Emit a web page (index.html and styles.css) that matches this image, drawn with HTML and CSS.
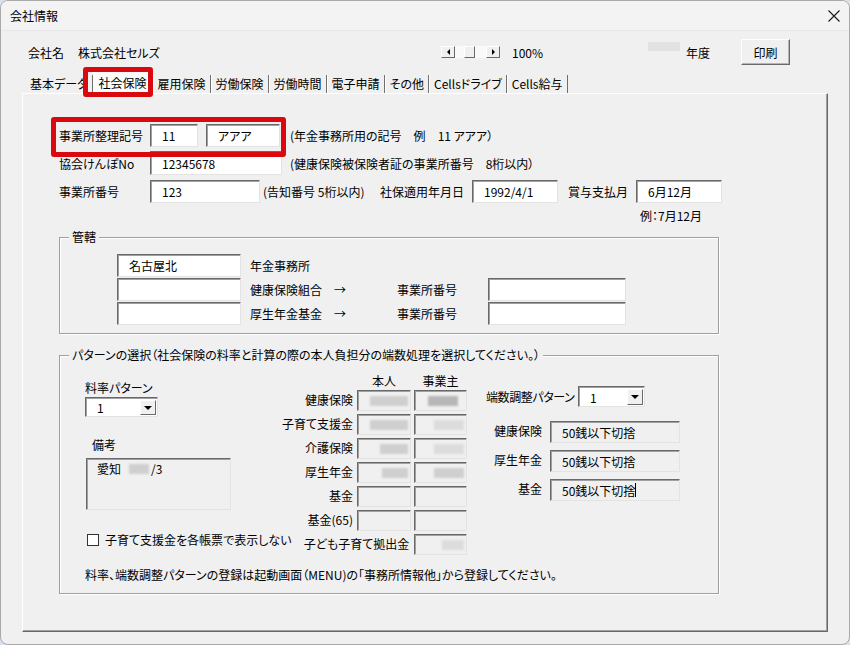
FILE: index.html
```html
<!DOCTYPE html>
<html lang="ja">
<head>
    <meta charset="UTF-8">
    <title>会社情報</title>
    <link rel="stylesheet" href="styles.css">
</head>
<body>

<div class="window">
    <div class="titlebar">
        <span>会社情報</span>
        <svg class="close" width="12" height="12" viewBox="0 0 12 12"><path d="M0.5 0.5 L11.5 11.5 M11.5 0.5 L0.5 11.5" stroke="#1a1a1a" stroke-width="1.1" fill="none"/></svg>
    </div>

    <div class="company">
        <span class="company-label">会社名</span>
        <span class="company-name">株式会社セルズ</span>
        <div class="scroller">
            <span class="sbtn"><span class="tri-left"></span></span>
            <span class="track"><span class="thumb"></span></span>
            <span class="sbtn"><span class="tri-right"></span></span>
        </div>
        <span class="zoom">100%</span>
        <span class="year-mask"></span>
        <span class="year">年度</span>
        <button class="print">印刷</button>
    </div>

    <div class="tabs">
        <span class="tab">基本データ</span>
        <span class="tab active">社会保険</span>
        <span class="tab">雇用保険</span>
        <span class="tab">労働保険</span>
        <span class="tab">労働時間</span>
        <span class="tab">電子申請</span>
        <span class="tab">その他</span>
        <span class="tab">Cellsドライブ</span>
        <span class="tab">Cells給与</span>
    </div>

    <div class="panel">
        <div class="row">
            <span class="lbl-main">事業所整理記号</span>
            <span class="box w48">11</span>
            <span class="box w74 gap8">アアア</span>
            <span class="note gap10">(年金事務所用の記号　例　11 アアア）</span>
        </div>
        <div class="row row2">
            <span class="lbl-main">協会けんぽNo</span>
            <span class="box w132">12345678</span>
            <span class="note gap8">(健康保険被保険者証の事業所番号　8桁以内）</span>
        </div>
        <div class="row row3">
            <span class="lbl-main">事業所番号</span>
            <span class="box w110">123</span>
            <span class="note gap3 w117">(告知番号 5桁以内)</span>
            <span class="w92">社保適用年月日</span>
            <span class="box w86">1992/4/1</span>
            <span class="gap10 w68">賞与支払月</span>
            <span class="box w86">6月12月</span>
        </div>
        <div class="example">例：7月12月</div>

        <div class="group group-office">
            <span class="group-title">管轄</span>
            <div class="office-row">
                <span class="box w124">名古屋北</span>
                <span class="gap9">年金事務所</span>
            </div>
            <div class="office-row">
                <span class="box w124"></span>
                <span class="gap9 w147">健康保険組合　→</span>
                <span class="w91">事業所番号</span>
                <span class="box w138"></span>
            </div>
            <div class="office-row">
                <span class="box w124"></span>
                <span class="gap9 w147">厚生年金基金　→</span>
                <span class="w91">事業所番号</span>
                <span class="box w138"></span>
            </div>
        </div>

        <div class="group group-pattern">
            <span class="group-title">パターンの選択（社会保険の料率と計算の際の本人負担分の端数処理を選択してください。）</span>
            <div class="cols">
                <div class="col-left">
                    <div class="rate-label">料率パターン</div>
                    <div class="combo combo-rate">
                        <span class="combo-val">1</span>
                        <span class="drop"><span class="tri-down"></span></span>
                    </div>
                    <div class="remark-label">備考</div>
                    <div class="remark">愛知 <span class="mask remark-mask"></span>/3</div>
                    <label class="check">
                        <span class="checkbox"></span>
                        子育て支援金を各帳票で表示しない
                    </label>
                </div>

                <div class="rates">
                    <span></span>
                    <span class="head">本人</span>
                    <span class="head">事業主</span>

                    <span class="rlabel">健康保険</span>
                    <span class="box off"><span class="mask m40"></span></span>
                    <span class="box off pr8"><span class="mask dark m30"></span></span>

                    <span class="rlabel">子育て支援金</span>
                    <span class="box off"><span class="mask m40"></span></span>
                    <span class="box off"><span class="mask light m30"></span></span>

                    <span class="rlabel">介護保険</span>
                    <span class="box off"><span class="mask m28"></span></span>
                    <span class="box off"><span class="mask light m30"></span></span>

                    <span class="rlabel">厚生年金</span>
                    <span class="box off"><span class="mask m26"></span></span>
                    <span class="box off"><span class="mask m30"></span></span>

                    <span class="rlabel">基金</span>
                    <span class="box off"></span>
                    <span class="box off"></span>

                    <span class="rlabel">基金(65)</span>
                    <span class="box off"></span>
                    <span class="box off"></span>

                    <span class="rlabel wide">子ども子育て拠出金</span>
                    <span class="box off"><span class="mask light m22"></span></span>
                </div>

                <div class="col-right">
                    <div class="round-row">
                        <span class="round-label">端数調整パターン</span>
                        <div class="combo combo-round">
                            <span class="combo-val">1</span>
                            <span class="drop"><span class="tri-down"></span></span>
                        </div>
                    </div>
                    <div class="round-item first">
                        <span class="ilabel">健康保険</span>
                        <span class="box off w130">50銭以下切捨</span>
                    </div>
                    <div class="round-item">
                        <span class="ilabel">厚生年金</span>
                        <span class="box off w130">50銭以下切捨</span>
                    </div>
                    <div class="round-item">
                        <span class="ilabel">基金</span>
                        <span class="box off w130">50銭以下切捨<span class="caret"></span></span>
                    </div>
                </div>
            </div>
            <div class="foot-note">料率、端数調整パターンの登録は起動画面（MENU)の「事務所情報他」から登録してください。</div>
        </div>
    </div>

    <!-- red highlight marks -->
    <div class="mark mark-tab"></div>
    <div class="mark mark-code"></div>
</div>

</body>
</html>
```

FILE: styles.css
```css
* {
    box-sizing: border-box;
}
body {
    margin: 0;
    background: #d9e1ea;
    font-family: "Noto Sans CJK JP", "Noto Sans", sans-serif;
    font-size: 12px;
    font-feature-settings: "palt";
    color: #000;
}
.window {
    position: relative;
    width: 850px;
    height: 645px;
    background: #f0f0f0;
    border: 1px solid #a9a9a9;
    border-radius: 8px;
    overflow: hidden;
}
.titlebar {
    height: 30px;
    display: flex;
    align-items: center;
    justify-content: space-between;
    padding: 0 9px;
    border-bottom: 1px solid #e8e8e8;
    background: #f3f3f3;
}

/* company row */
.company {
    display: flex;
    align-items: center;
    height: 26px;
    margin-top: 8px;
    padding-left: 27px;
}
.company-label {
    width: 50px;
}
.company-name {
    width: 363px;
}
.scroller {
    display: flex;
    width: 59px;
    height: 12px;
}
.sbtn {
    width: 14px;
    height: 12px;
    display: flex;
    align-items: center;
    justify-content: center;
    background: #f0f0f0;
    border: 1px solid;
    border-color: #fff #696969 #696969 #fff;
}
.track {
    flex: 1;
    background: #f9f9f9;
    padding-left: 9px;
}
.thumb {
    display: block;
    width: 11px;
    height: 12px;
    background: #f0f0f0;
    border: 1px solid;
    border-color: #fff #696969 #696969 #fff;
}
.tri-left {
    border-top: 3px solid transparent;
    border-bottom: 3px solid transparent;
    border-right: 3px solid #000;
}
.tri-right {
    border-top: 3px solid transparent;
    border-bottom: 3px solid transparent;
    border-left: 3px solid #000;
}
.zoom {
    margin-left: 12px;
    width: 136px;
}
.year-mask {
    width: 32px;
    height: 9px;
    margin-top: -12px;
    background: #e2e2e2;
}
.year {
    margin-left: 6px;
    width: 55px;
}
.print {
    width: 49px;
    height: 26px;
    font: inherit;
    background: #f0f0f0;
    border: 1px solid;
    border-color: #fff #696969 #696969 #fff;
    box-shadow: inset -1px -1px 0 #b5b5b5;
    padding: 0;
}

/* tabs */
.tabs {
    display: flex;
    height: 18px;
    margin-top: 10px;
    padding-left: 24px;
}
.tab {
    display: flex;
    align-items: center;
    padding: 0 4px;
    border-right: 1px solid #6e6e6e;
    border-left: 1px solid #fff;
    line-height: 16px;
}
.tab:first-child {
    border-left: none;
    padding-left: 5px;
}
.tab.active {
    background: #fbfbfb;
    padding: 0 5px;
    margin-top: -3px;
    height: 21px;
}

/* panel */
.panel {
    margin-left: 21px;
    width: 806px;
    height: 539px;
    border: 1px solid;
    border-color: #fff #696969 #696969 #fff;
    box-shadow: inset -1px -1px 0 #a0a0a0;
    padding: 30px 0 0 36px;
}
.row {
    display: flex;
    align-items: center;
    height: 23px;
}
.row2 {
    height: 24px;
    margin-top: 4px;
}
.row3 {
    margin-top: 5px;
}
.lbl-main {
    width: 91px;
}
.box {
    display: flex;
    align-items: center;
    height: 100%;
    background: #fff;
    border: 1px solid;
    border-color: #696969 #e3e3e3 #e3e3e3 #696969;
    box-shadow: inset 1px 1px 0 #a0a0a0;
    padding-left: 11px;
    white-space: nowrap;
}
.box.off {
    background: #f0f0f0;
}
.w48 { width: 48px; }
.w68 { width: 68px; }
.w74 { width: 74px; }
.w86 { width: 86px; }
.w91 { width: 91px; }
.w92 { width: 92px; }
.w110 { width: 110px; }
.w117 { width: 117px; }
.w124 { width: 124px; }
.w130 { width: 130px; }
.w132 { width: 132px; }
.w138 { width: 138px; }
.w147 { width: 147px; }
.gap3 { margin-left: 3px; }
.gap8 { margin-left: 8px; }
.gap9 { margin-left: 9px; }
.gap10 { margin-left: 10px; }
.note {
    white-space: nowrap;
}
.example {
    margin: 5px 0 0 581px;
    line-height: 16px;
}

/* group boxes */
.group {
    position: relative;
    width: 660px;
    border: 1px solid #a0a0a0;
    box-shadow: inset 1px 1px 0 #fff, 1px 1px 0 #fff;
}
.group-title {
    position: absolute;
    top: -9px;
    left: 9px;
    padding: 0 3px;
    line-height: 16px;
    background: #f0f0f0;
    white-space: nowrap;
}
.group-office {
    margin-top: 13px;
    padding: 16px 0 8px 57px;
    display: flex;
    flex-direction: column;
    gap: 1px;
}
.office-row {
    display: flex;
    align-items: center;
    height: 23px;
}
.group-pattern {
    margin-top: 21px;
    height: 239px;
    padding: 18px 0 0 25px;
}
.cols {
    display: flex;
    align-items: flex-start;
}
.col-left {
    width: 200px;
    display: flex;
    flex-direction: column;
    align-items: flex-start;
}
.rate-label {
    margin-top: 6px;
    line-height: 16px;
}
.combo {
    display: flex;
    background: #fff;
    border: 1px solid;
    border-color: #696969 #e3e3e3 #e3e3e3 #696969;
    box-shadow: inset 1px 1px 0 #a0a0a0;
    padding: 2px 1px 1px 2px;
}
.combo-rate {
    margin-top: 1px;
    width: 73px;
    height: 20px;
}
.combo-round {
    width: 67px;
    height: 21px;
}
.combo-val {
    flex: 1;
    display: flex;
    align-items: center;
    padding-left: 9px;
}
.drop {
    width: 16px;
    display: flex;
    align-items: center;
    justify-content: center;
    background: #f0f0f0;
    border: 1px solid;
    border-color: #fff #696969 #696969 #fff;
}
.tri-down {
    border-left: 4px solid transparent;
    border-right: 4px solid transparent;
    border-top: 4px solid #000;
}
.remark-label {
    margin: 20px 0 0 7px;
    line-height: 16px;
}
.remark {
    margin: 5px 0 0 1px;
    width: 145px;
    height: 52px;
    background: #f0f0f0;
    border: 1px solid;
    border-color: #696969 #e3e3e3 #e3e3e3 #696969;
    box-shadow: inset 1px 1px 0 #a0a0a0;
    padding: 2px 0 0 10px;
    display: flex;
    align-items: flex-start;
    line-height: 16px;
}
.remark-mask {
    display: inline-block;
    width: 20px;
    height: 11px;
    margin: 3px 2px 0 8px;
}
.check {
    margin: 22px 0 0 2px;
    display: flex;
    align-items: center;
    gap: 6px;
    line-height: 16px;
    white-space: nowrap;
}
.checkbox {
    width: 12px;
    height: 12px;
    background: #fff;
    border: 1px solid #333;
}

/* rates grid */
.rates {
    display: grid;
    grid-template-columns: 69px 54px 53px;
    grid-template-rows: 13px repeat(7, 21px);
    column-gap: 3px;
    row-gap: 3px;
}
.head {
    text-align: center;
    line-height: 13px;
}
.rlabel {
    display: flex;
    align-items: center;
    justify-content: flex-end;
    padding-right: 1px;
    padding-bottom: 2px;
    white-space: nowrap;
}
.rlabel.wide {
    grid-column: span 2;
    justify-content: center;
    padding-left: 18px;
}
.rates .box {
    justify-content: flex-end;
    padding: 0 2px 0 0;
}
.rates .box.pr8 {
    padding-right: 8px;
}
.mask {
    height: 10px;
    background: #cfcfcf;
    filter: blur(1px);
}
.mask.dark {
    background: #b7b7b7;
}
.mask.light {
    background: #dcdcdc;
}
.m22 { width: 22px; }
.m26 { width: 26px; }
.m28 { width: 28px; }
.m30 { width: 30px; }
.m40 { width: 38px; }

/* rounding column */
.col-right {
    margin-left: 19px;
}
.round-row {
    margin-top: 12px;
    display: flex;
    align-items: center;
}
.round-label {
    width: 92px;
    white-space: nowrap;
    letter-spacing: -0.4px;
}
.round-item {
    display: flex;
    align-items: center;
    height: 22px;
    margin-top: 7px;
}
.round-item.first {
    margin-top: 14px;
}
.ilabel {
    width: 56px;
    text-align: right;
    padding-bottom: 4px;
    margin-right: 8px;
}
.caret {
    display: inline-block;
    width: 1px;
    height: 14px;
    background: #000;
}
.foot-note {
    margin-top: 12px;
    line-height: 16px;
    white-space: nowrap;
}

/* red highlight marks */
.mark {
    position: absolute;
    border: 5px solid #d9090f;
    border-radius: 3px;
}
.mark-tab {
    left: 82px;
    top: 66px;
    width: 70px;
    height: 30px;
}
.mark-code {
    left: 50px;
    top: 116px;
    width: 235px;
    height: 40px;
}
```
